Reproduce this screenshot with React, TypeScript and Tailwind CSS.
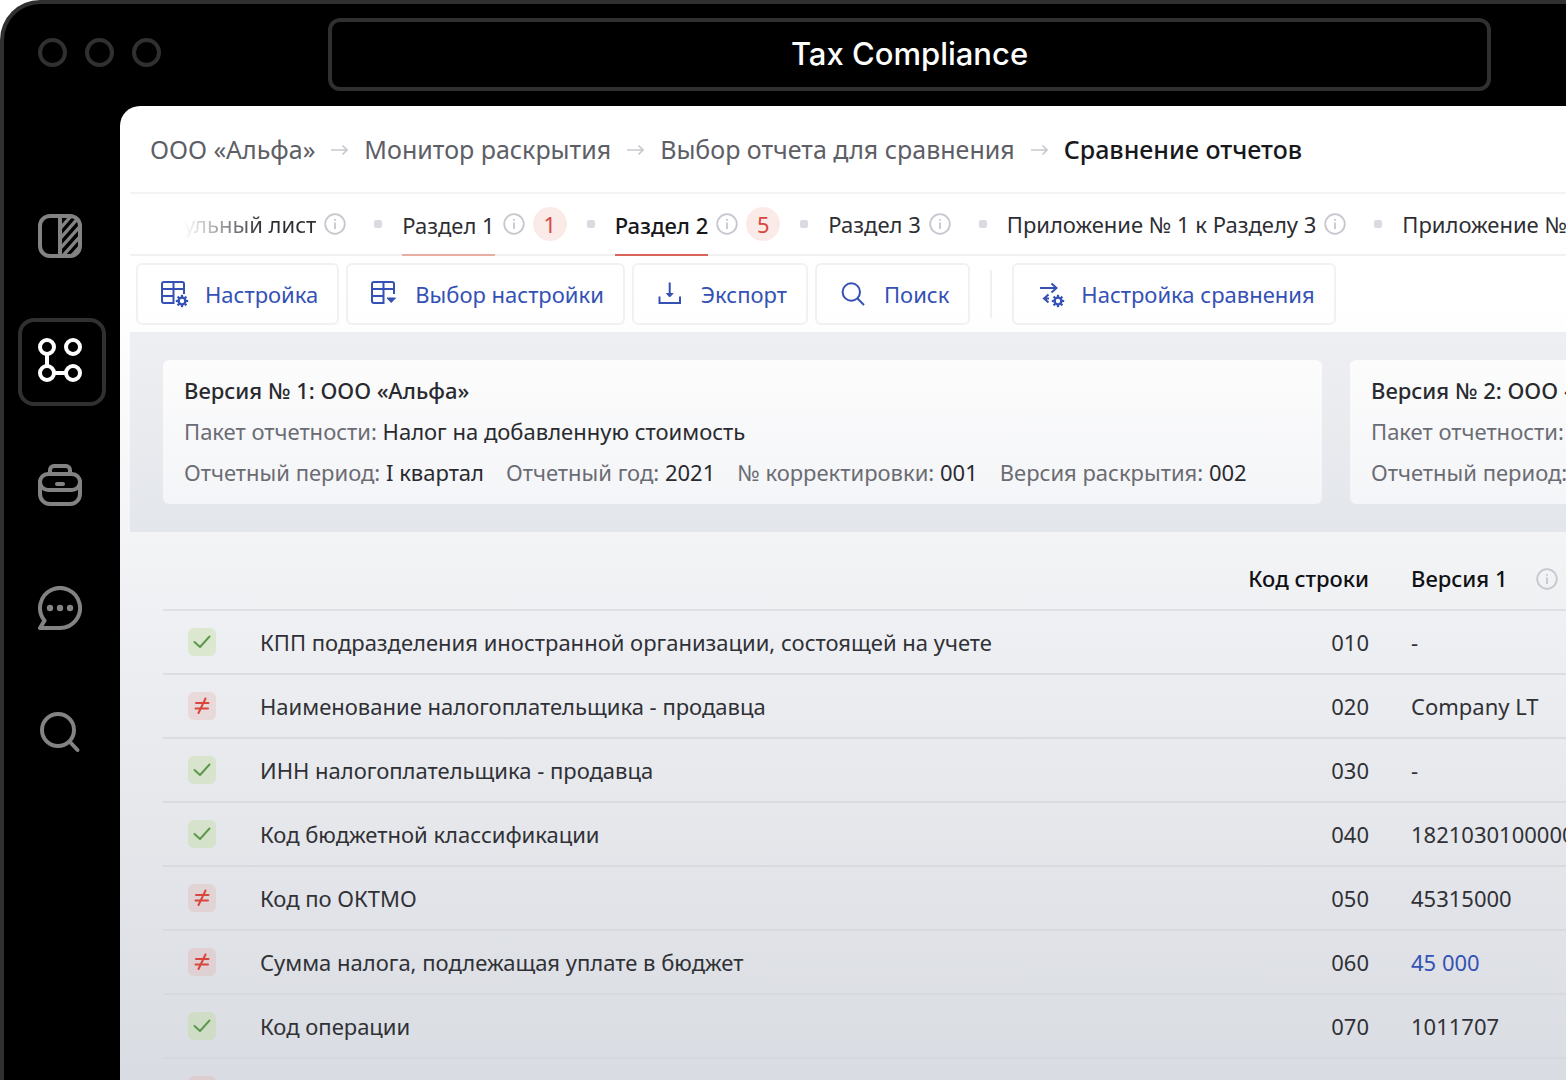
import { Fragment } from 'react';
import type { ReactNode } from 'react';

type RowStatus = 'match' | 'diff';

interface ReportRow {
  status: RowStatus;
  name: string;
  code: string;
  value: string;
  isLink?: boolean;
}

interface SectionTab {
  label: string;
  errors?: number;
  state?: 'faded' | 'visited' | 'active';
}

const BREADCRUMBS = ['ООО «Альфа»', 'Монитор раскрытия', 'Выбор отчета для сравнения'];

const TABS: SectionTab[] = [
  { label: 'ульный лист', state: 'faded' },
  { label: 'Раздел 1', errors: 1, state: 'visited' },
  { label: 'Раздел 2', errors: 5, state: 'active' },
  { label: 'Раздел 3' },
  { label: 'Приложение № 1 к Разделу 3' },
  { label: 'Приложение № 2 к Разделу 3' },
];

const ROWS: ReportRow[] = [
  { status: 'match', name: 'КПП подразделения иностранной организации, состоящей на учете', code: '010', value: '-' },
  { status: 'diff', name: 'Наименование налогоплательщика - продавца', code: '020', value: 'Company LT' },
  { status: 'match', name: 'ИНН налогоплательщика - продавца', code: '030', value: '-' },
  { status: 'match', name: 'Код бюджетной классификации', code: '040', value: '18210301000001000110' },
  { status: 'diff', name: 'Код по ОКТМО', code: '050', value: '45315000' },
  { status: 'diff', name: 'Сумма налога, подлежащая уплате в бюджет', code: '060', value: '45 000', isLink: true },
  { status: 'match', name: 'Код операции', code: '070', value: '1011707' },
  { status: 'diff', name: '', code: '', value: '' },
];

const GEAR_TEETH = [0, 45, 90, 135, 180, 225, 270, 315];

export default function App() {
  return (
    <div className="h-screen overflow-hidden bg-white font-['Noto_Sans',sans-serif]">
      <div className="flex h-full flex-col overflow-hidden rounded-tl-[40px] border-t-4 border-l-4 border-[#303030] bg-black">
        <TitleBar />
        <div className="flex min-h-0 flex-1">
          <Sidebar />
          <main className="min-w-0 flex-1 overflow-hidden rounded-tl-[20px] bg-linear-to-b from-white from-20% via-[#eeeff2] via-55% to-[#d9dce2] pl-[10px]">
            <Breadcrumbs />
            <SectionTabs />
            <Toolbar />
            <VersionCards />
            <ReportTable />
          </main>
        </div>
      </div>
    </div>
  );
}

function TitleBar() {
  return (
    <header className="flex h-[102px] shrink-0 items-center pr-[75px] pb-px pl-[34px]">
      <div className="mr-[167px] mb-1 flex gap-[18px]">
        {[0, 1, 2].map((i) => (
          <span key={i} className="size-[29px] rounded-full border-4 border-[#303030]" />
        ))}
      </div>
      <h1 className="flex h-[73px] flex-1 items-center justify-center rounded-xl border-4 border-[#303030] font-['Inter',sans-serif] text-[31px] font-medium text-white">
        Tax Compliance
      </h1>
    </header>
  );
}

function Sidebar() {
  const items: { label: string; icon: ReactNode; active?: boolean }[] = [
    { label: 'Панели', icon: <PanelIcon /> },
    { label: 'Процессы', icon: <NodesIcon />, active: true },
    { label: 'Портфель', icon: <BriefcaseIcon /> },
    { label: 'Сообщения', icon: <ChatIcon /> },
    { label: 'Поиск', icon: <SidebarSearchIcon /> },
  ];

  return (
    <nav className="flex w-[116px] shrink-0 flex-col gap-9 pt-[88px] pl-[14px]">
      {items.map((item) => (
        <button
          key={item.label}
          type="button"
          aria-label={item.label}
          className={`flex size-[88px] items-center justify-center rounded-2xl border-4 pr-1 pb-1 ${
            item.active ? 'border-[#303030] text-white' : 'border-transparent text-[#838383]'
          }`}
        >
          {item.icon}
        </button>
      ))}
    </nav>
  );
}

function Breadcrumbs() {
  return (
    <nav className="flex h-[88px] items-center gap-4 border-b-2 border-[#f3f3f5] pt-[2px] pl-5 text-[25px] whitespace-nowrap text-[#5d5e66]">
      {BREADCRUMBS.map((label) => (
        <Fragment key={label}>
          <a href="#">{label}</a>
          <svg viewBox="0 0 17 12" className="h-3 w-[17px] shrink-0 text-[#c8c9cf]" fill="none" stroke="currentColor" strokeWidth="1.6">
            <path d="M0 6H16M11.5 1.5L16 6L11.5 10.5" />
          </svg>
        </Fragment>
      ))}
      <span className="font-medium text-[#17181c]">Сравнение отчетов</span>
    </nav>
  );
}

function SectionTabs() {
  return (
    <div className="flex h-[62px] border-b-2 border-[#f1f1f4] pl-[54px] text-[22px] whitespace-nowrap text-[#2d2e33]">
      {TABS.map((tab, index) => (
        <Fragment key={tab.label}>
          {index > 0 && <span className="mx-5 size-2 shrink-0 self-center rounded-xs bg-[#d9dbe1]" />}
          <div className="flex shrink-0 items-center gap-2">
            <button type="button" className={tabClass(tab.state)}>
              {tab.label}
            </button>
            <InfoIcon />
            {tab.errors ? (
              <span className="flex size-[34px] items-center justify-center rounded-full bg-[#fbebe8] text-[#d8473d]">
                {tab.errors}
              </span>
            ) : (
              <span />
            )}
          </div>
        </Fragment>
      ))}
    </div>
  );
}

function tabClass(state: SectionTab['state']) {
  switch (state) {
    case 'faded':
      return 'h-full bg-linear-to-r from-transparent to-[#2d2e33] to-60% bg-clip-text text-transparent';
    case 'visited':
      return '-mb-[2px] h-[62px] border-y-2 border-t-transparent border-b-[#e8aea2]';
    case 'active':
      return '-mb-[2px] h-[62px] border-y-2 border-t-transparent border-b-[#d8645b] font-medium text-[#17181c]';
    default:
      return 'h-full';
  }
}

function Toolbar() {
  return (
    <div className="flex h-[76px] items-center gap-[7px] pl-[6px]">
      <ToolbarButton icon={<TableGearIcon />}>Настройка</ToolbarButton>
      <ToolbarButton icon={<TableSelectIcon />}>Выбор настройки</ToolbarButton>
      <ToolbarButton icon={<ExportIcon />}>Экспорт</ToolbarButton>
      <ToolbarButton icon={<SearchIcon />}>Поиск</ToolbarButton>
      <span className="mx-[13px] h-12 w-[2px] bg-[#f0f0f3]" />
      <ToolbarButton icon={<CompareGearIcon />}>Настройка сравнения</ToolbarButton>
    </div>
  );
}

function ToolbarButton({ icon, children }: { icon: ReactNode; children: ReactNode }) {
  return (
    <button
      type="button"
      className="flex h-[62px] shrink-0 items-center gap-4 rounded-md border-2 border-[#f1f1f4] pr-[19px] pl-[23px] text-[22px] whitespace-nowrap text-[#3451b5]"
    >
      {icon}
      {children}
    </button>
  );
}

function VersionCards() {
  return (
    <section className="flex gap-7 overflow-hidden bg-linear-to-b from-[#eeeff2] to-[#e3e6eb] px-[33px] py-7">
      {[1, 2].map((version) => (
        <article
          key={version}
          className="w-[1159px] shrink-0 rounded-md bg-linear-to-b from-[#fcfcfc] to-[#f4f5f8] px-[21px] pt-[10px] pb-[11px] text-[22px] leading-[41px] whitespace-nowrap text-[#292a2f]"
        >
          <h2 className="font-medium">Версия № {version}: ООО «Альфа»</h2>
          <p>
            <Label>Пакет отчетности:</Label> Налог на добавленную стоимость
          </p>
          <div className="flex gap-[22px]">
            <p>
              <Label>Отчетный период:</Label> I квартал
            </p>
            <p>
              <Label>Отчетный год:</Label> 2021
            </p>
            <p>
              <Label>№ корректировки:</Label> 001
            </p>
            <p>
              <Label>Версия раскрытия:</Label> 002
            </p>
          </div>
        </article>
      ))}
    </section>
  );
}

function Label({ children }: { children: ReactNode }) {
  return <span className="text-[#6b6c73]">{children}</span>;
}

function ReportTable() {
  return (
    <div className="pl-[33px]">
      <table className="w-full table-fixed text-[22px] whitespace-nowrap text-[#303136]">
        <thead>
          <tr className="h-[78px] border-b-2 border-[#dfe0e4] text-[#101114]">
            <th className="w-[97px]" aria-label="Статус" />
            <th aria-label="Наименование" />
            <th className="w-[160px] pt-4 text-right font-medium">Код строки</th>
            <th className="w-[197px] pt-4 pl-[42px] text-left font-medium">
              <span className="flex items-center gap-7">
                Версия 1 <InfoIcon />
              </span>
            </th>
          </tr>
        </thead>
        <tbody>
          {ROWS.map((row, index) => (
            <tr key={index} className="h-16 border-b-2 border-[#d3d6dc]/70">
              <td className="pl-[25px]">
                <StatusMark status={row.status} />
              </td>
              <td>{row.name}</td>
              <td className="text-right">{row.code}</td>
              <td className="overflow-hidden pl-[42px]">
                {row.isLink ? (
                  <a href="#" className="text-[#3451b5]">
                    {row.value}
                  </a>
                ) : (
                  row.value
                )}
              </td>
            </tr>
          ))}
        </tbody>
      </table>
    </div>
  );
}

function StatusMark({ status }: { status: RowStatus }) {
  const isMatch = status === 'match';

  return (
    <span className={`flex size-7 items-center justify-center rounded-md ${isMatch ? 'bg-[#b9da90]/35' : 'bg-[#e5a09a]/25'}`}>
      <svg
        viewBox="0 0 28 28"
        className={`size-7 ${isMatch ? 'text-[#5b9a4c]' : 'text-[#d8463c]'}`}
        fill="none"
        stroke="currentColor"
        strokeWidth="2"
        strokeLinecap="round"
        strokeLinejoin="round"
      >
        {isMatch ? <path d="M6.5 14L12 19L21.5 8.5" /> : <path d="M8 11H20.5M7.5 16.5H20M17.5 6.5L10.5 21" />}
      </svg>
    </span>
  );
}

function InfoIcon() {
  return (
    <svg viewBox="0 0 22 22" className="size-[22px] shrink-0 text-[#c6c7ce]" fill="none" stroke="currentColor">
      <circle cx="11" cy="11" r="9.8" strokeWidth="1.8" />
      <path d="M11 9.5V16M11 6V7.8" strokeWidth="1.8" />
    </svg>
  );
}

/** Small settings gear that sits in the corner of the toolbar icons. */
function Gear() {
  return (
    <g>
      <circle cx="21" cy="21" r="3.4" strokeWidth="2.4" />
      {GEAR_TEETH.map((angle) => (
        <path key={angle} d="M21 17V14.8" strokeWidth="2.2" transform={`rotate(${angle} 21 21)`} />
      ))}
    </g>
  );
}

function ToolbarSvg({ children }: { children: ReactNode }) {
  return (
    <svg viewBox="0 0 28 28" className="size-7 shrink-0" fill="none" stroke="currentColor" strokeWidth="2">
      {children}
    </svg>
  );
}

function TableGearIcon() {
  return (
    <ToolbarSvg>
      <path d="M23 14V4a2 2 0 0 0-2-2H3a2 2 0 0 0-2 2v17a2 2 0 0 0 2 2h9.5V2M1 9h22M1 16h11.5" />
      <Gear />
    </ToolbarSvg>
  );
}

function TableSelectIcon() {
  return (
    <ToolbarSvg>
      <path d="M23 14V4a2 2 0 0 0-2-2H3a2 2 0 0 0-2 2v17a2 2 0 0 0 2 2h9.5V2M1 9h22M1 16h11.5" />
      <path d="M16 18H24.5L20.2 22.5Z" fill="currentColor" strokeWidth="1" strokeLinejoin="round" />
    </ToolbarSvg>
  );
}

function ExportIcon() {
  return (
    <ToolbarSvg>
      <path d="M12.7 2.5V15M2.5 16.5V23H23V16.5" />
      <path d="M9.5 13.5H16L12.7 17Z" fill="currentColor" strokeWidth="1" />
    </ToolbarSvg>
  );
}

function SearchIcon() {
  return (
    <ToolbarSvg>
      <circle cx="11.3" cy="12" r="8.7" />
      <path d="M17.5 18.5L24 25" />
    </ToolbarSvg>
  );
}

function CompareGearIcon() {
  return (
    <ToolbarSvg>
      <path d="M3 8H19.5M14.5 3.5L19.5 8L14.5 12.5M11.5 14.5L7 18.5L11.5 22.5M7 18.5H12" />
      <Gear />
    </ToolbarSvg>
  );
}

function SidebarSvg({ children }: { children: ReactNode }) {
  return (
    <svg
      viewBox="0 0 44 44"
      className="size-11 shrink-0"
      fill="none"
      stroke="currentColor"
      strokeWidth="4"
      strokeLinecap="round"
      strokeLinejoin="round"
    >
      {children}
    </svg>
  );
}

function PanelIcon() {
  return (
    <SidebarSvg>
      <clipPath id="panel-right">
        <path d="M22 2H32A10 10 0 0 1 42 12V32A10 10 0 0 1 32 42H22Z" />
      </clipPath>
      <rect x="2" y="2" width="40" height="40" rx="10" />
      <path d="M22 2V42" strokeLinecap="butt" />
      <path d="M20 17L34 1M20 27L42 2M20 37L44 10M22 45L46 18M30 46L46 28" strokeWidth="3.4" clipPath="url(#panel-right)" />
    </SidebarSvg>
  );
}

function NodesIcon() {
  return (
    <SidebarSvg>
      <circle cx="9" cy="9" r="7" />
      <circle cx="35" cy="9" r="7" />
      <circle cx="9" cy="35" r="7" />
      <circle cx="35" cy="35" r="7" />
      <path d="M9 16V28M16 35H28" />
    </SidebarSvg>
  );
}

function BriefcaseIcon() {
  return (
    <SidebarSvg>
      <path d="M12 11V8a4 4 0 0 1 4-4H28a4 4 0 0 1 4 4V11" />
      <rect x="2" y="12" width="40" height="16" rx="8" />
      <path d="M2 19V32a10 10 0 0 0 10 10H32a10 10 0 0 0 10-10V19M19 22H25" />
    </SidebarSvg>
  );
}

function ChatIcon() {
  return (
    <SidebarSvg>
      <path d="M22 42A20 20 0 1 0 6.5 34.6L2 42Z" />
      <g fill="currentColor" stroke="none">
        <circle cx="12" cy="22" r="3.2" />
        <circle cx="22" cy="22" r="3.2" />
        <circle cx="32" cy="22" r="3.2" />
      </g>
    </SidebarSvg>
  );
}

function SidebarSearchIcon() {
  return (
    <SidebarSvg>
      <circle cx="20" cy="20" r="16" />
      <path d="M31.5 31.5L39.5 40" />
    </SidebarSvg>
  );
}
